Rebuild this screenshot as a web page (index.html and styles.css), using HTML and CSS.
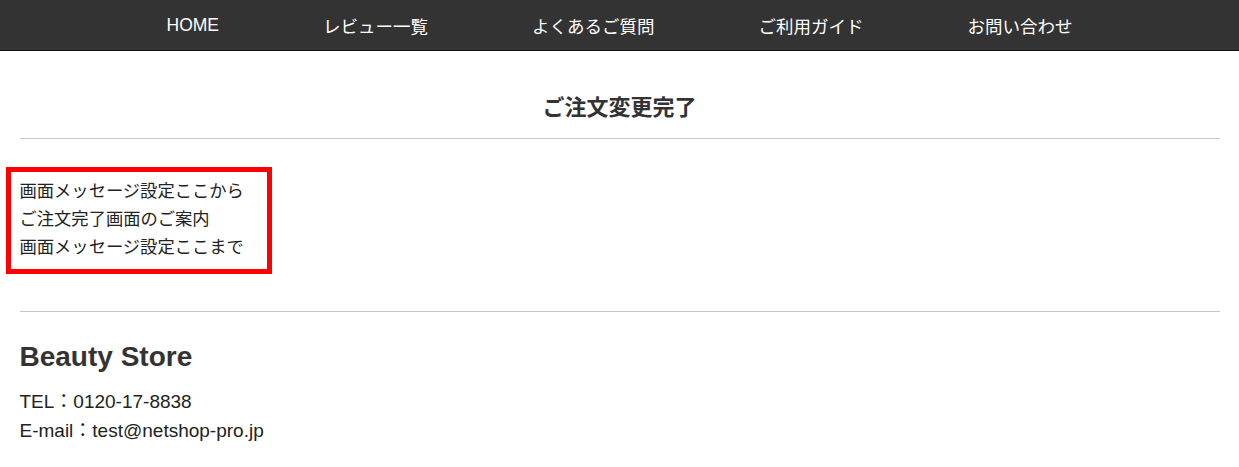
FILE: index.html
```html
<!DOCTYPE html>
<html lang="ja">
<head>
  <meta charset="UTF-8" />
  <meta name="viewport" content="width=device-width, initial-scale=1.0"/>
  <title>ご注文変更完了</title>
  <link rel="stylesheet" href="styles.css">
</head>
<body>

  <nav class="global-nav">
    <ul>
      <li><a href="#">HOME</a></li>
      <li><a href="#">レビュー一覧</a></li>
      <li><a href="#">よくあるご質問</a></li>
      <li><a href="#">ご利用ガイド</a></li>
      <li><a href="#">お問い合わせ</a></li>
    </ul>
  </nav>

  <main class="container">
    <h2 class="page-title">ご注文変更完了</h2>

    <!-- 画面メッセージ設定 -->
    <div class="message-box">
      <p>画面メッセージ設定ここから</p>
      <p>ご注文完了画面のご案内</p>
      <p>画面メッセージ設定ここまで</p>
    </div>
  </main>

  <footer class="container footer">
    <h3 class="shop-name">Beauty Store</h3>
    <p>TEL：0120-17-8838</p>
    <p>E-mail：test@netshop-pro.jp</p>
  </footer>

</body>
</html>
```

FILE: styles.css
```css
* { box-sizing: border-box; margin: 0; padding: 0; }
body {
  font-family: "Liberation Sans", "Noto Sans CJK JP", sans-serif;
  background: #fff;
  color: #333;
}
.global-nav {
  background: #333;
  border-bottom: 1px solid #111;
}
.global-nav ul {
  list-style: none;
  display: flex;
  justify-content: center;
  height: 50px;
  align-items: center;
}
.global-nav li {
  padding: 0 52px;
}
.global-nav a {
  color: #fff;
  text-decoration: none;
  font-size: 17.5px;
}
.container {
  width: 1200px;
  margin: 0 auto;
}
.page-title {
  text-align: center;
  font-size: 22px;
  line-height: 33px;
  padding: 40px 0 14px;
  border-bottom: 1px solid #c6c6c6;
}
.message-box {
  display: inline-block;
  margin: 28px 0 37px -14px;
  padding: 5px 23px 8px 9px;
  border: 5px solid #f00;
  font-size: 17.3px;
  line-height: 28px;
  color: #222;
}
.footer {
  border-top: 1px solid #c6c6c6;
  padding-top: 27px;
  font-size: 19px;
  line-height: 29px;
  color: #222;
}
.shop-name {
  font-size: 28px;
  line-height: 36px;
  margin-bottom: 12px;
  color: #333;
}
```
